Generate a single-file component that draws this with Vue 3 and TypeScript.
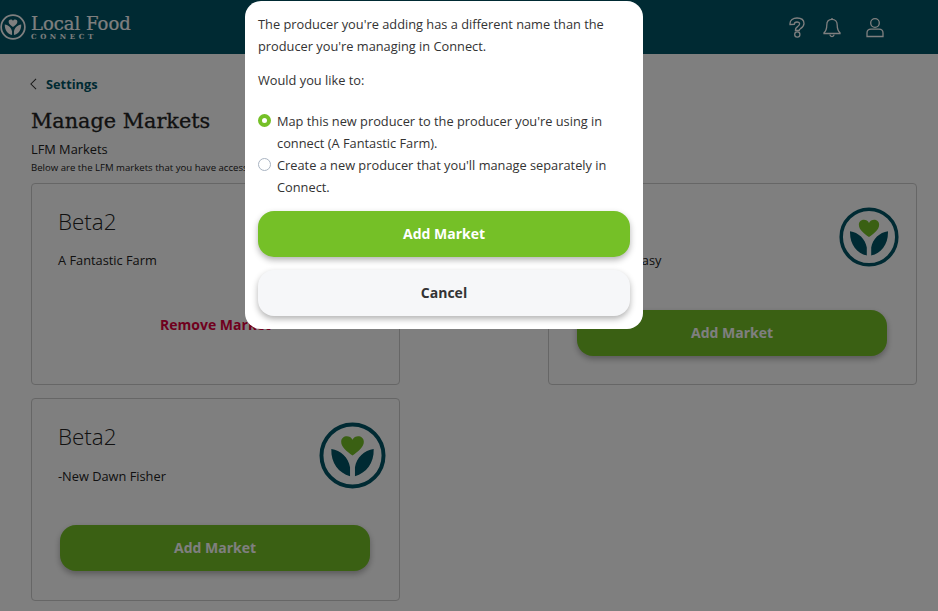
<script setup lang="ts">
interface Market {
  id: number;
  name: string;
  producer: string;
  added: boolean;
  smallLogo?: boolean;
}

const markets: Market[] = [
  { id: 1, name: "Beta2", producer: "A Fantastic Farm", added: true },
  { id: 2, name: "Beta2", producer: "-Nice and Easy", added: false, smallLogo: true },
  { id: 3, name: "Beta2", producer: "-New Dawn Fisher", added: false },
];
</script>

<template>
  <div class="page">
    <header class="topbar">
      <div class="brand">
        <svg class="brand-mark" viewBox="0 0 68 68">
          <circle cx="34" cy="34" r="31" fill="none" stroke="#fff" stroke-width="4.500" />
          <path d="M34 34c-6-4.500-11.500-8.500-11.500-14 0-6.500 9-7.500 11.500-2 2.500-5.500 11.500-4.500 11.500 2 0 5.500-5.500 9.500-11.500 14z" fill="#fff" />
          <path d="M31.500 66V55C20 52 12 42 12.500 27.500 22 29 30 36 31.500 46z" fill="#fff" />
          <path d="M36.500 66V55C48 52 56 42 55.500 27.500 46 29 38 36 36.500 46z" fill="#fff" />
        </svg>
        <div class="brand-text">
          <span class="brand-name">Local Food</span>
          <span class="brand-sub">CONNECT</span>
        </div>
      </div>
      <div class="top-icons">
        <svg class="icon help" viewBox="0 0 16 21" fill="none" stroke="#fff" stroke-width="1.300">
          <path d="M1 6.500C1 3 4 1 8 1c4 0 7 2 7 5.500 0 3-2 4.200-3.600 5.200-.9.600-1.200 1-1.200 1.800H6.400c0-2.200 1-3.200 2.400-4.100 1-.7 1.800-1.200 1.800-2.600 0-1.100-1-1.800-2.600-1.800-1.700 0-2.700.9-2.800 2.400L1 7.500z" />
          <circle cx="8.300" cy="17.500" r="2.600" />
        </svg>
        <svg class="icon bell" viewBox="0 0 18 20" fill="none" stroke="#fff" stroke-width="1.300">
          <path d="M9 1.800c-3.300 0-5.200 2.400-5.200 5.600 0 4-1 6.200-2.800 7.800v.8h16v-.8c-1.800-1.600-2.800-3.800-2.800-7.800 0-3.200-1.900-5.600-5.200-5.600z" />
          <path d="M9 .6v1.200M6.800 17.200c.3 1.200 1.100 1.900 2.200 1.900s1.900-.7 2.200-1.900" />
        </svg>
        <svg class="icon user" viewBox="0 0 18 20" fill="none" stroke="#fff" stroke-width="1.300">
          <circle cx="9" cy="5.500" r="4.300" />
          <path d="M1 19v-3.500c0-2.400 1.800-3.900 4-3.900h8c2.200 0 4 1.500 4 3.900V19z" />
        </svg>
      </div>
    </header>

    <main class="content">
      <a class="back">
        <svg viewBox="0 0 8 14" fill="none" stroke-width="1.200">
          <path d="M7 1 1 7l6 6" />
        </svg>
        <span>Settings</span>
      </a>
      <h1>Manage Markets</h1>
      <h2>LFM Markets</h2>
      <p class="hint">Below are the LFM markets that you have access to</p>

      <div class="cards">
        <section v-for="m in markets" :key="m.id" class="card">
          <div class="card-head">
            <div>
              <h3>{{ m.name }}</h3>
              <p class="producer">{{ m.producer }}</p>
            </div>
            <svg class="logo" :class="{ small: m.smallLogo }" viewBox="0 0 68 68">
              <circle cx="34" cy="34" r="31.500" fill="none" stroke="#005566" stroke-width="4" />
              <path d="M34 34c-6-4.500-11.500-8.500-11.500-14 0-6.500 9-7.500 11.500-2 2.500-5.500 11.500-4.500 11.500 2 0 5.500-5.500 9.500-11.500 14z" fill="#75c027" />
              <path d="M31.500 66V55C20 52 12 42 12.500 27.500 22 29 30 36 31.500 46z" fill="#005566" />
              <path d="M36.500 66V55C48 52 56 42 55.500 27.500 46 29 38 36 36.500 46z" fill="#005566" />
            </svg>
          </div>
          <a v-if="m.added" class="remove">Remove Market</a>
          <button v-else class="btn add">Add Market</button>
        </section>
      </div>
    </main>

    <div class="overlay">
      <div class="modal">
        <p>The producer you're adding has a different name than the producer you're managing in Connect.</p>
        <p class="ask">Would you like to:</p>
        <label class="option">
          <span class="radio on"></span>
          <span>Map this new producer to the producer you're using in connect (A Fantastic Farm).</span>
        </label>
        <label class="option">
          <span class="radio"></span>
          <span>Create a new producer that you'll manage separately in Connect.</span>
        </label>
        <button class="btn add first">Add Market</button>
        <button class="btn cancel">Cancel</button>
      </div>
    </div>
  </div>
</template>

<style>
html,
body {
  margin: 0;
  background: #fff;
}
</style>

<style scoped>
.page {
  position: relative;
  width: 938px;
  height: 611px;
  overflow: hidden;
  font-family: "Open Sans", sans-serif;
  color: #222;
}

.topbar {
  display: flex;
  justify-content: space-between;
  align-items: center;
  height: 54px;
  background: #005566;
}

.brand {
  display: flex;
  align-items: center;
  gap: 5px;
}

.brand-mark {
  width: 26px;
  height: 26px;
}

.brand-text {
  display: flex;
  flex-direction: column;
  color: #fff;
  font-family: "DejaVu Serif", serif;
}

.brand-name {
  font-size: 18px;
  line-height: 19px;
  -webkit-text-stroke: 0.2px #fff;
}

.brand-sub {
  font-size: 7px;
  font-weight: 700;
  letter-spacing: 3.6px;
  line-height: 8px;
}

.top-icons {
  display: flex;
  align-items: center;
  gap: 17px;
  padding-right: 54px;
}

.icon {
  display: block;
  height: 21px;
}

.help {
  width: 16px;
  margin-right: 1px;
}

.bell {
  width: 18px;
  margin-right: 1px;
}

.user {
  width: 18px;
  margin-left: 7px;
}

.content {
  padding: 21px 21px 0 30px;
}

.back {
  display: flex;
  align-items: center;
  gap: 9px;
  font-size: 12.8px;
  font-weight: 700;
  line-height: 18px;
  color: #005566;
}

.back svg {
  width: 7px;
  height: 12px;
  stroke: #333;
}

h1 {
  margin: 14px 0 0 1px;
  font-family: "DejaVu Serif", serif;
  font-size: 20.8px;
  font-weight: 400;
  line-height: 28px;
  color: #222;
  -webkit-text-stroke: 0.3px #222;
}

h2 {
  margin: 6px 0 0 1px;
  font-size: 12.8px;
  font-weight: 400;
  line-height: 17px;
}

.hint {
  margin: 3px 0 0 1px;
  font-size: 9.600px;
  line-height: 13px;
  white-space: nowrap;
}

.cards {
  display: flex;
  flex-wrap: wrap;
  gap: 13px 148px;
  margin: 9px 0 0 1px;
}

.card {
  box-sizing: border-box;
  width: 369px;
  height: 202.4px;
  border: 1px solid #ccc;
  border-radius: 4px;
}

.card-head {
  display: flex;
  justify-content: space-between;
  box-sizing: border-box;
  height: 90px;
  padding: 21px 13px 0 26px;
}

h3 {
  margin: 0;
  font-size: 22.4px;
  font-weight: 300;
  line-height: 34px;
}

.producer {
  margin: 12.3px 0 0;
  font-size: 12.8px;
  line-height: 18px;
}

.logo {
  width: 67px;
  height: 67px;
  margin-top: 2px;
}

.logo.small {
  width: 60px;
  height: 60px;
  margin-right: 4px;
}

.btn {
  display: block;
  box-sizing: border-box;
  width: 100%;
  height: 46px;
  padding: 0 0 2px;
  border: none;
  border-radius: 16px;
  font-family: inherit;
  font-size: 14px;
  font-weight: 700;
  box-shadow: 0 3px 6px rgba(0, 0, 0, 0.3);
}

.add {
  color: #fff;
  background: #75c027;
}

.card .add {
  width: 310px;
  margin: 36px 0 0 28px;
}

.remove {
  display: block;
  margin-top: 41px;
  font-size: 14px;
  font-weight: 700;
  line-height: 20px;
  text-align: center;
  color: #e0003c;
}

.overlay {
  position: absolute;
  inset: 0;
  display: flex;
  justify-content: center;
  align-items: flex-start;
  background: rgba(0, 0, 0, 0.5);
}

.modal {
  box-sizing: border-box;
  width: 398px;
  margin: 1px 50px 0 0;
  padding: 12px 13px 13px;
  background: #fff;
  border-radius: 16px;
  font-size: 12.8px;
  line-height: 22px;
  color: #333;
}

.modal p {
  margin: 0;
}

.modal .ask {
  margin: 12px 0 19px;
}

.option {
  display: flex;
  gap: 6px;
}

.radio {
  flex: none;
  box-sizing: border-box;
  width: 13px;
  height: 13px;
  margin-top: 4px;
  border: 1px solid #a9b4c2;
  border-radius: 50%;
  background: #fff;
}

.radio.on {
  border: 4px solid #75c027;
}

.first {
  margin-top: 13px;
}

.cancel {
  margin-top: 13px;
  color: #333;
  background: #f6f7f9;
}
</style>
